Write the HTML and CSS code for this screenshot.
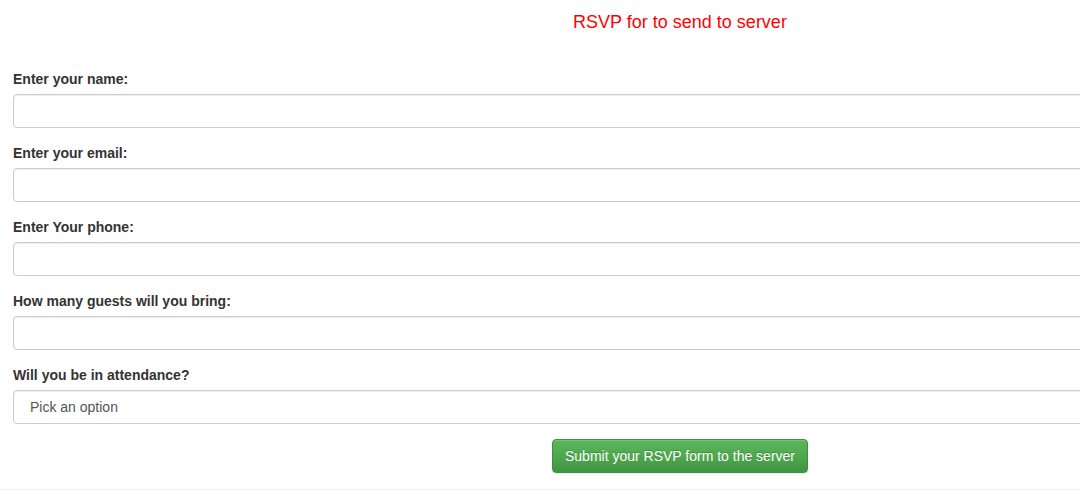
FILE: index.html
```html
<!DOCTYPE html>
<html>
<head>
<meta charset="utf-8">
<link rel="stylesheet" href="styles.css">
</head>
<body>
<div class="page">
  <h2 class="title">RSVP for to send to server</h2>
  <form class="form">
    <div class="group">
      <label class="label">Enter your name:</label>
      <input class="control" type="text">
    </div>
    <div class="group">
      <label class="label">Enter your email:</label>
      <input class="control" type="text">
    </div>
    <div class="group">
      <label class="label">Enter Your phone:</label>
      <input class="control" type="text">
    </div>
    <div class="group">
      <label class="label">How many guests will you bring:</label>
      <input class="control" type="text">
    </div>
    <div class="group">
      <label class="label">Will you be in attendance?</label>
      <div class="control select"><span>Pick an option</span></div>
    </div>
    <div class="actions">
      <button class="btn" type="button">Submit your RSVP form to the server</button>
    </div>
  </form>
</div>
</body>
</html>
```
FILE: styles.css
```css
html, body {
  margin: 0;
  padding: 0;
  overflow: hidden;
  background: #fff;
}
body {
  font-family: "Liberation Sans", Arial, sans-serif;
  font-size: 14px;
  color: #333;
}
.page {
  width: 1360px;
  box-sizing: border-box;
  padding: 12px 13px 0;
  border-bottom: 1px solid #eee;
  height: 490px;
}
.title {
  margin: 0 0 37px;
  font-size: 18px;
  line-height: 20px;
  font-weight: normal;
  color: #f00;
  text-align: center;
}
.group {
  margin-bottom: 15px;
}
.label {
  display: block;
  font-weight: bold;
  line-height: 20px;
  margin-bottom: 5px;
  color: #333;
}
.control {
  display: block;
  box-sizing: border-box;
  width: 100%;
  height: 34px;
  margin: 0;
  padding: 6px 12px;
  font-family: inherit;
  font-size: 14px;
  color: #555;
  background: #fff;
  border: 1px solid #ccc;
  border-radius: 4px;
  box-shadow: inset 0 1px 1px rgba(0,0,0,.075);
  outline: none;
}
.select {
  padding-left: 16px;
  line-height: 20px;
}
.actions {
  display: flex;
  justify-content: center;
}
.btn {
  height: 34px;
  padding: 6px 12px;
  font-family: inherit;
  font-size: 14px;
  line-height: 20px;
  color: #fff;
  border: 1px solid #3e8f3e;
  border-radius: 4px;
  background: linear-gradient(to bottom, #5cb85c 0%, #419641 100%);
  text-shadow: 0 -1px 0 rgba(0,0,0,.2);
  box-shadow: inset 0 1px 0 rgba(255,255,255,.15), 0 1px 1px rgba(0,0,0,.075);
  cursor: pointer;
}
```
